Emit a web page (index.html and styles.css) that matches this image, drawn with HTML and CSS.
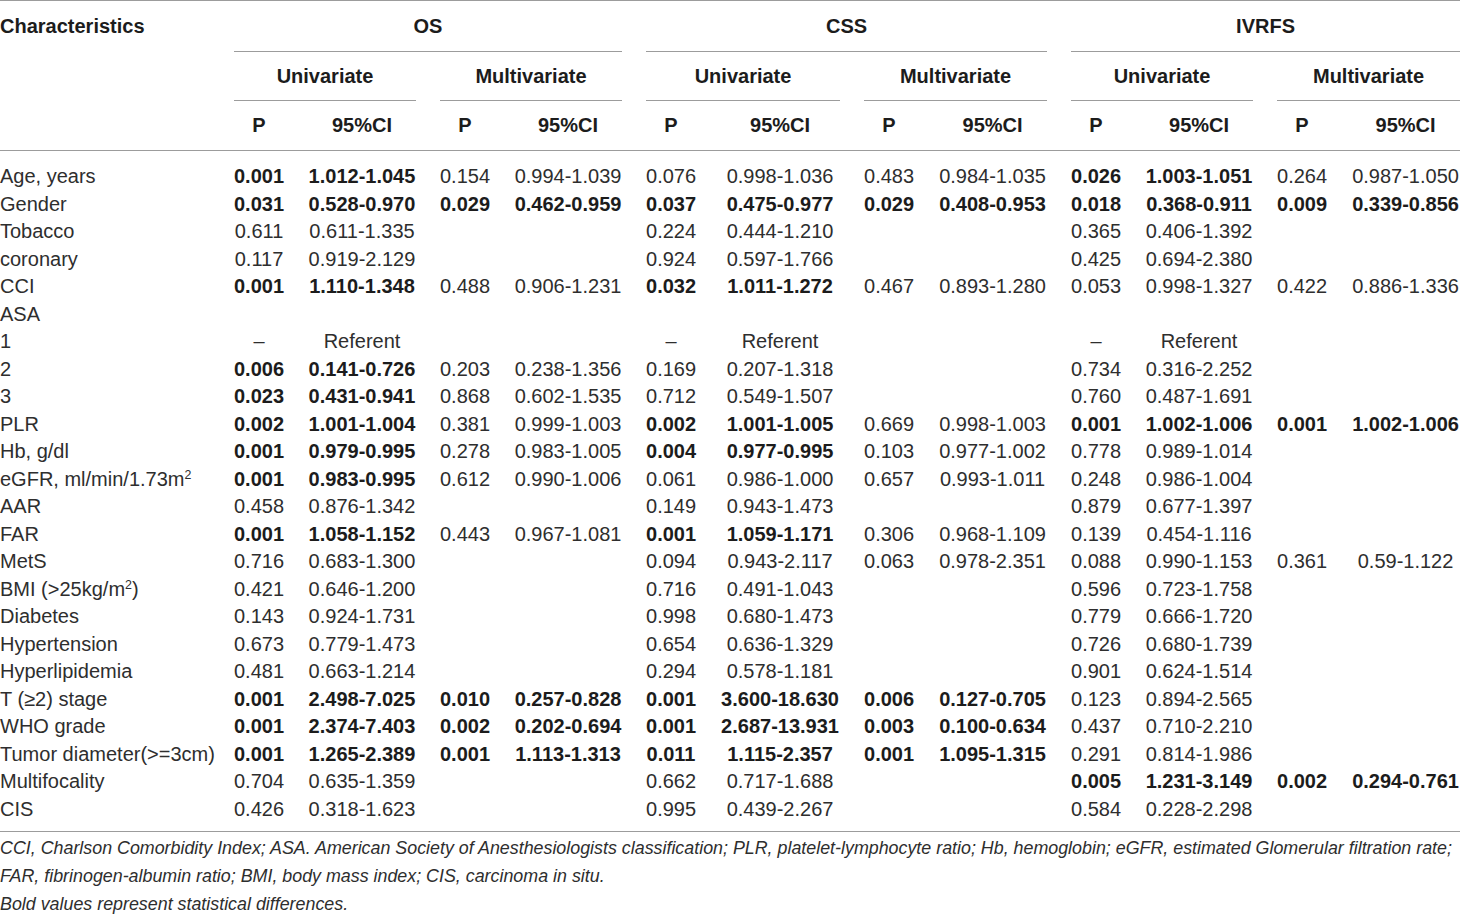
FILE: index.html
```html
<!DOCTYPE html>
<html lang="en">
<head>
<meta charset="utf-8">
<title>Table</title>
<link rel="stylesheet" href="styles.css">
</head>
<body>
<div class="page">
<table class="stats">
  <colgroup>
    <col class="c-char">
    <col class="c-p"><col class="c-ci1">
    <col class="c-p"><col class="c-ci2">
    <col class="c-p"><col class="c-ci3">
    <col class="c-p"><col class="c-ci4">
    <col class="c-p"><col class="c-ci5">
    <col class="c-p"><col class="c-ci6">
  </colgroup>
  <thead>
    <tr class="h1">
      <th class="char" rowspan="3">Characteristics</th>
      <th class="grp" colspan="4"><div class="ln">OS</div></th>
      <th class="grp" colspan="4"><div class="ln">CSS</div></th>
      <th class="grp last" colspan="4"><div class="ln">IVRFS</div></th>
    </tr>
    <tr class="h2">
      <th class="grp" colspan="2"><div class="ln">Univariate</div></th>
      <th class="grp" colspan="2"><div class="ln">Multivariate</div></th>
      <th class="grp" colspan="2"><div class="ln">Univariate</div></th>
      <th class="grp" colspan="2"><div class="ln">Multivariate</div></th>
      <th class="grp" colspan="2"><div class="ln">Univariate</div></th>
      <th class="grp last" colspan="2"><div class="ln">Multivariate</div></th>
    </tr>
    <tr class="h3">
      <th>P</th><th>95%CI</th><th>P</th><th>95%CI</th>
      <th>P</th><th>95%CI</th><th>P</th><th>95%CI</th>
      <th>P</th><th>95%CI</th><th>P</th><th class="last">95%CI</th>
    </tr>
  </thead>
  <tbody>
    <tr class="first"><td>Age, years</td><td class="b">0.001</td><td class="b">1.012-1.045</td><td>0.154</td><td>0.994-1.039</td><td>0.076</td><td>0.998-1.036</td><td>0.483</td><td>0.984-1.035</td><td class="b">0.026</td><td class="b">1.003-1.051</td><td>0.264</td><td class="last">0.987-1.050</td></tr>
    <tr><td>Gender</td><td class="b">0.031</td><td class="b">0.528-0.970</td><td class="b">0.029</td><td class="b">0.462-0.959</td><td class="b">0.037</td><td class="b">0.475-0.977</td><td class="b">0.029</td><td class="b">0.408-0.953</td><td class="b">0.018</td><td class="b">0.368-0.911</td><td class="b">0.009</td><td class="b last">0.339-0.856</td></tr>
    <tr><td>Tobacco</td><td>0.611</td><td>0.611-1.335</td><td></td><td></td><td>0.224</td><td>0.444-1.210</td><td></td><td></td><td>0.365</td><td>0.406-1.392</td><td></td><td class="last"></td></tr>
    <tr><td>coronary</td><td>0.117</td><td>0.919-2.129</td><td></td><td></td><td>0.924</td><td>0.597-1.766</td><td></td><td></td><td>0.425</td><td>0.694-2.380</td><td></td><td class="last"></td></tr>
    <tr><td>CCI</td><td class="b">0.001</td><td class="b">1.110-1.348</td><td>0.488</td><td>0.906-1.231</td><td class="b">0.032</td><td class="b">1.011-1.272</td><td>0.467</td><td>0.893-1.280</td><td>0.053</td><td>0.998-1.327</td><td>0.422</td><td class="last">0.886-1.336</td></tr>
    <tr><td>ASA</td><td></td><td></td><td></td><td></td><td></td><td></td><td></td><td></td><td></td><td></td><td></td><td class="last"></td></tr>
    <tr><td>1</td><td>–</td><td>Referent</td><td></td><td></td><td>–</td><td>Referent</td><td></td><td></td><td>–</td><td>Referent</td><td></td><td class="last"></td></tr>
    <tr><td>2</td><td class="b">0.006</td><td class="b">0.141-0.726</td><td>0.203</td><td>0.238-1.356</td><td>0.169</td><td>0.207-1.318</td><td></td><td></td><td>0.734</td><td>0.316-2.252</td><td></td><td class="last"></td></tr>
    <tr><td>3</td><td class="b">0.023</td><td class="b">0.431-0.941</td><td>0.868</td><td>0.602-1.535</td><td>0.712</td><td>0.549-1.507</td><td></td><td></td><td>0.760</td><td>0.487-1.691</td><td></td><td class="last"></td></tr>
    <tr><td>PLR</td><td class="b">0.002</td><td class="b">1.001-1.004</td><td>0.381</td><td>0.999-1.003</td><td class="b">0.002</td><td class="b">1.001-1.005</td><td>0.669</td><td>0.998-1.003</td><td class="b">0.001</td><td class="b">1.002-1.006</td><td class="b">0.001</td><td class="b last">1.002-1.006</td></tr>
    <tr><td>Hb, g/dl</td><td class="b">0.001</td><td class="b">0.979-0.995</td><td>0.278</td><td>0.983-1.005</td><td class="b">0.004</td><td class="b">0.977-0.995</td><td>0.103</td><td>0.977-1.002</td><td>0.778</td><td>0.989-1.014</td><td></td><td class="last"></td></tr>
    <tr><td>eGFR, ml/min/1.73m<sup>2</sup></td><td class="b">0.001</td><td class="b">0.983-0.995</td><td>0.612</td><td>0.990-1.006</td><td>0.061</td><td>0.986-1.000</td><td>0.657</td><td>0.993-1.011</td><td>0.248</td><td>0.986-1.004</td><td></td><td class="last"></td></tr>
    <tr><td>AAR</td><td>0.458</td><td>0.876-1.342</td><td></td><td></td><td>0.149</td><td>0.943-1.473</td><td></td><td></td><td>0.879</td><td>0.677-1.397</td><td></td><td class="last"></td></tr>
    <tr><td>FAR</td><td class="b">0.001</td><td class="b">1.058-1.152</td><td>0.443</td><td>0.967-1.081</td><td class="b">0.001</td><td class="b">1.059-1.171</td><td>0.306</td><td>0.968-1.109</td><td>0.139</td><td>0.454-1.116</td><td></td><td class="last"></td></tr>
    <tr><td>MetS</td><td>0.716</td><td>0.683-1.300</td><td></td><td></td><td>0.094</td><td>0.943-2.117</td><td>0.063</td><td>0.978-2.351</td><td>0.088</td><td>0.990-1.153</td><td>0.361</td><td class="last">0.59-1.122</td></tr>
    <tr><td>BMI (&gt;25kg/m<sup>2</sup>)</td><td>0.421</td><td>0.646-1.200</td><td></td><td></td><td>0.716</td><td>0.491-1.043</td><td></td><td></td><td>0.596</td><td>0.723-1.758</td><td></td><td class="last"></td></tr>
    <tr><td>Diabetes</td><td>0.143</td><td>0.924-1.731</td><td></td><td></td><td>0.998</td><td>0.680-1.473</td><td></td><td></td><td>0.779</td><td>0.666-1.720</td><td></td><td class="last"></td></tr>
    <tr><td>Hypertension</td><td>0.673</td><td>0.779-1.473</td><td></td><td></td><td>0.654</td><td>0.636-1.329</td><td></td><td></td><td>0.726</td><td>0.680-1.739</td><td></td><td class="last"></td></tr>
    <tr><td>Hyperlipidemia</td><td>0.481</td><td>0.663-1.214</td><td></td><td></td><td>0.294</td><td>0.578-1.181</td><td></td><td></td><td>0.901</td><td>0.624-1.514</td><td></td><td class="last"></td></tr>
    <tr><td>T (≥2) stage</td><td class="b">0.001</td><td class="b">2.498-7.025</td><td class="b">0.010</td><td class="b">0.257-0.828</td><td class="b">0.001</td><td class="b">3.600-18.630</td><td class="b">0.006</td><td class="b">0.127-0.705</td><td>0.123</td><td>0.894-2.565</td><td></td><td class="last"></td></tr>
    <tr><td>WHO grade</td><td class="b">0.001</td><td class="b">2.374-7.403</td><td class="b">0.002</td><td class="b">0.202-0.694</td><td class="b">0.001</td><td class="b">2.687-13.931</td><td class="b">0.003</td><td class="b">0.100-0.634</td><td>0.437</td><td>0.710-2.210</td><td></td><td class="last"></td></tr>
    <tr><td>Tumor diameter(&gt;=3cm)</td><td class="b">0.001</td><td class="b">1.265-2.389</td><td class="b">0.001</td><td class="b">1.113-1.313</td><td class="b">0.011</td><td class="b">1.115-2.357</td><td class="b">0.001</td><td class="b">1.095-1.315</td><td>0.291</td><td>0.814-1.986</td><td></td><td class="last"></td></tr>
    <tr><td>Multifocality</td><td>0.704</td><td>0.635-1.359</td><td></td><td></td><td>0.662</td><td>0.717-1.688</td><td></td><td></td><td class="b">0.005</td><td class="b">1.231-3.149</td><td class="b">0.002</td><td class="b last">0.294-0.761</td></tr>
    <tr class="final"><td>CIS</td><td>0.426</td><td>0.318-1.623</td><td></td><td></td><td>0.995</td><td>0.439-2.267</td><td></td><td></td><td>0.584</td><td>0.228-2.298</td><td></td><td class="last"></td></tr>
  </tbody>
</table>
<div class="notes">
  <p class="note">CCI, Charlson Comorbidity Index; ASA. American Society of Anesthesiologists classification; PLR, platelet-lymphocyte ratio; Hb, hemoglobin; eGFR, estimated Glomerular filtration rate;</p>
  <p class="note">FAR, fibrinogen-albumin ratio; BMI, body mass index; CIS, carcinoma in situ.</p>
  <p class="note">Bold values represent statistical differences.</p>
</div>
</div>
</body>
</html>
```

FILE: styles.css
```css
html, body {
  margin: 0;
  padding: 0;
  background: #ffffff;
}

.page {
  width: 1460px;
  font-family: "Liberation Sans", Arial, sans-serif;
  color: #2e2e2e;
}

.stats {
  width: 1460px;
  table-layout: fixed;
  border-collapse: separate;
  border-spacing: 0;
  border-top: 1px solid #9c9c9c;
  font-size: 20px;
}

.c-char { width: 222px; }
.c-p { width: 74px; }
.c-ci1 { width: 132px; }
.c-ci2 { width: 132px; }
.c-ci3 { width: 144px; }
.c-ci4 { width: 133px; }
.c-ci5 { width: 132px; }
.c-ci6 { width: 121px; }

.stats th,
.stats td {
  padding: 0 12px;
  text-align: center;
  vertical-align: top;
  white-space: nowrap;
}

.stats th {
  font-weight: bold;
  color: #1c1c1c;
}

.stats th.char,
.stats td:first-child {
  text-align: left;
  padding-left: 0;
}

.stats .last {
  padding-right: 0;
}

.stats th.char {
  line-height: 50px;
  border-bottom: 1px solid #9c9c9c;
}

.ln {
  border-bottom: 1px solid #9c9c9c;
}

.h1 .ln {
  line-height: 50px;
}

.h2 .ln {
  line-height: 48px;
}

.h3 th {
  line-height: 49px;
  border-bottom: 1px solid #9c9c9c;
}

.stats td {
  line-height: 27.5px;
}

.stats td.b {
  font-weight: bold;
  color: #1c1c1c;
}

.stats tr.first td {
  padding-top: 12px;
}

.stats tr.final td {
  padding-bottom: 8px;
  border-bottom: 1px solid #9c9c9c;
}

sup {
  font-size: 0.62em;
  line-height: 0;
  vertical-align: 0.55em;
}

.notes {
  padding-top: 2px;
}

.note {
  margin: 0;
  font-family: "Liberation Sans", Arial, sans-serif;
  font-style: italic;
  font-size: 17.85px;
  line-height: 28px;
  white-space: nowrap;
  color: #2e2e2e;
}
```
